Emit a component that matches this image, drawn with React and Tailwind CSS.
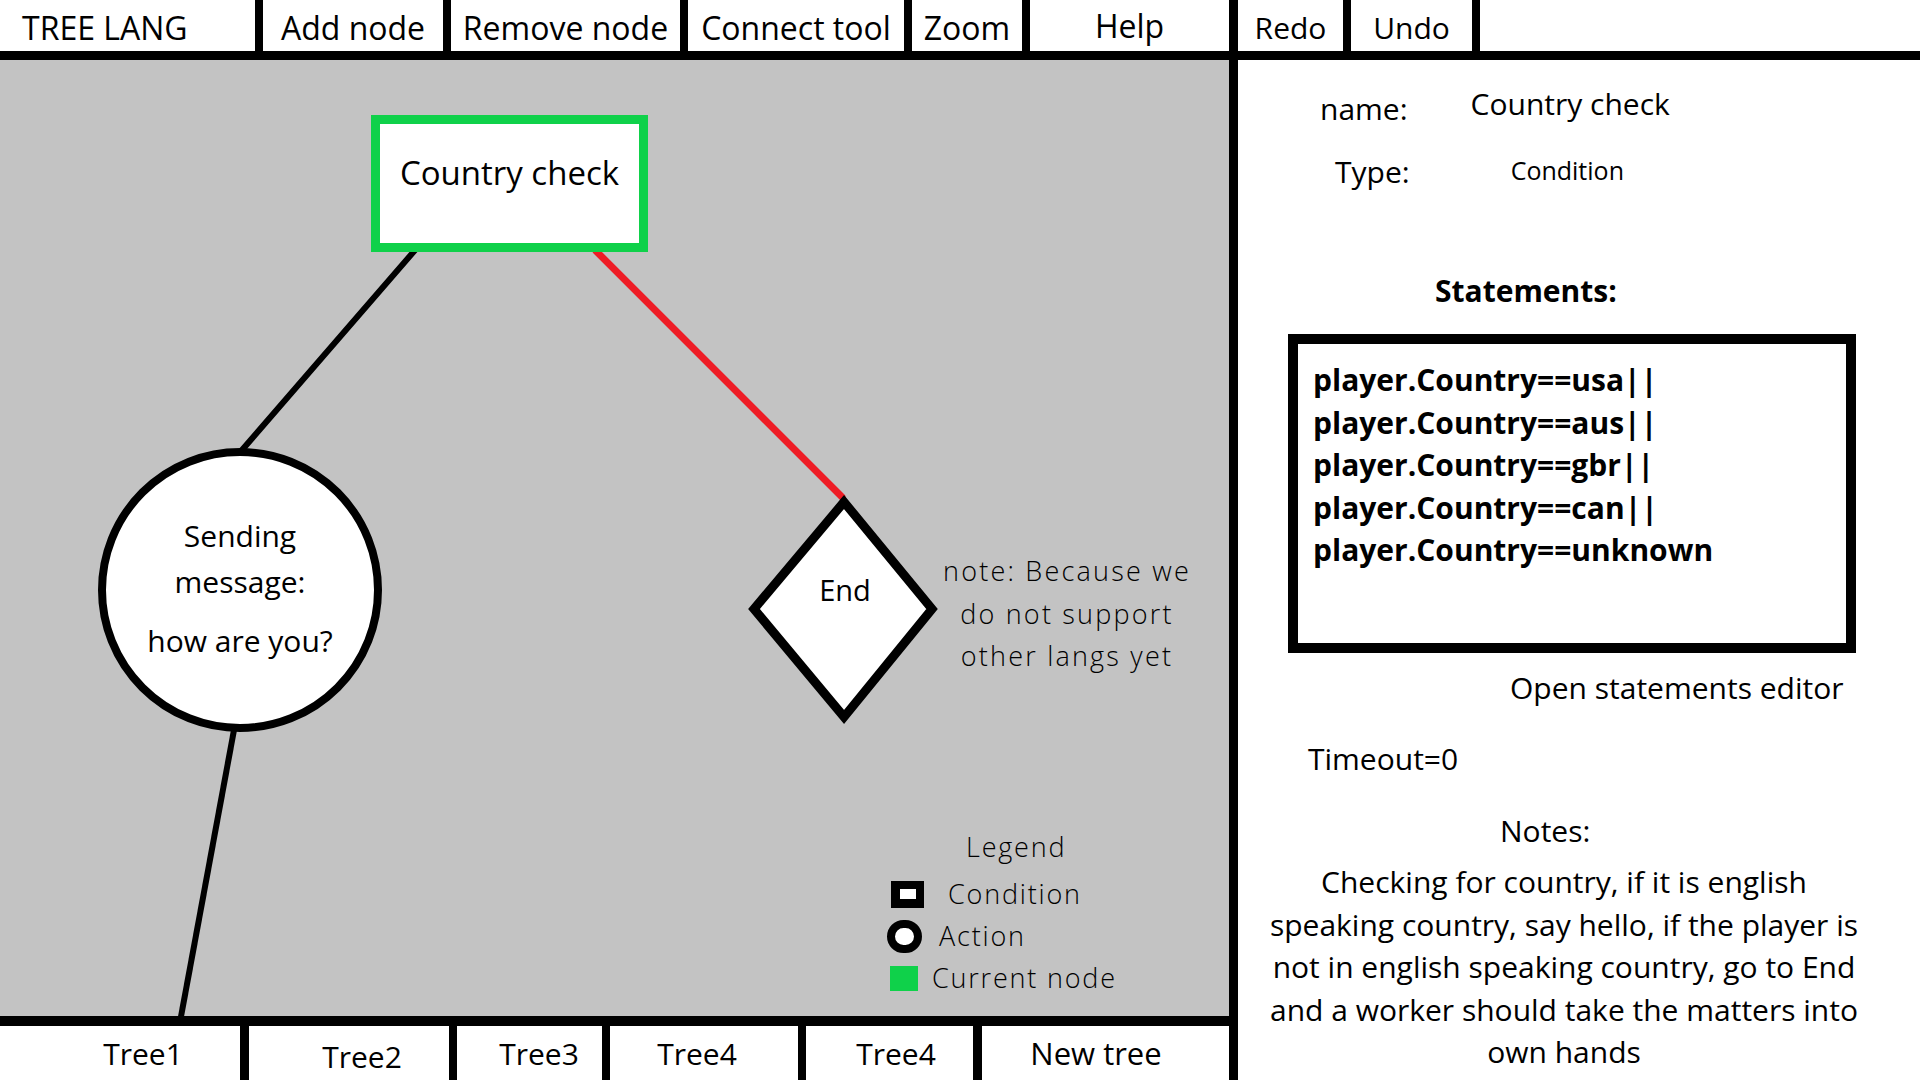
import React from 'react';

const font = { fontFamily: '"Open Sans", "Noto Sans", sans-serif' };

const menu = [
  { label: 'TREE LANG', w: 'w-[255px]', pad: 'pl-[22px] justify-start pt-[4px]' },
  { label: 'Add node', w: 'w-[180px]', pad: 'justify-center pt-[4px]' },
  { label: 'Remove node', w: 'w-[229px]', pad: 'justify-center pt-[4px]' },
  { label: 'Connect tool', w: 'w-[216px]', pad: 'justify-center pt-[4px]' },
  { label: 'Zoom', w: 'w-[110px]', pad: 'justify-center pt-[4px]' },
  { label: 'Help', w: 'w-[199px]', pad: 'justify-center' },
];

const tabs = [
  { label: 'Tree1', w: 'w-[240px]', pad: 'pl-[46px]' },
  { label: 'Tree2', w: 'w-[200px]', pad: 'pl-[26px] pt-[6px]' },
  { label: 'Tree3', w: 'w-[145px]', pad: 'pl-[19px]' },
  { label: 'Tree4', w: 'w-[188px]', pad: 'pr-[14px]' },
  { label: 'Tree4', w: 'w-[167px]', pad: 'pl-[13px]' },
  { label: 'New tree', w: 'w-[247px]', pad: 'pr-[19px] text-[31px]' },
];

const statements = [
  'player.Country==usa||',
  'player.Country==aus||',
  'player.Country==gbr||',
  'player.Country==can||',
  'player.Country==unknown',
];

const notes = [
  'Checking for country, if it is english',
  'speaking country, say hello, if the player is',
  'not in english speaking country, go to End',
  'and a worker should take the matters into',
  'own hands',
];

const MenuItem = ({ label, w, pad, size = 'text-[32px]' }) => (
  <div className={`${w} h-full flex items-center ${pad} ${size} whitespace-nowrap text-black`}>
    {label}
  </div>
);

const Sep = ({ w = 'w-[8px]' }) => <div className={`${w} h-full bg-black shrink-0`} />;

const Canvas = () => (
  <div className="relative flex-1 bg-[#c3c3c3] overflow-hidden">
    <svg className="absolute inset-0" width="1229" height="956">
      <line x1="416" y1="189" x2="242" y2="390" stroke="#000" strokeWidth="6" strokeLinecap="round" />
      <line x1="596" y1="191" x2="842" y2="437" stroke="#ee1c25" strokeWidth="7" strokeLinecap="round" />
      <line x1="234" y1="670" x2="180" y2="962" stroke="#000" strokeWidth="6" />
      <polygon points="844,442 754,549 844,657 932,549" fill="#fff" stroke="#000" strokeWidth="9" />
    </svg>

    {/* condition node */}
    <div className="absolute left-[371px] top-[55px] w-[277px] h-[137px] border-[9px] border-[#0fd14a] bg-white flex justify-center">
      <span className="mt-[29px] text-[33px] leading-[40px] whitespace-nowrap">Country check</span>
    </div>

    {/* action node */}
    <div className="absolute left-[98px] top-[388px] w-[284px] h-[284px] rounded-full border-[8px] border-black bg-white flex flex-col items-center text-[30px]">
      <span className="mt-[57px] leading-[46px]">Sending</span>
      <span className="leading-[46px]">message:</span>
      <span className="mt-[13px] leading-[46px] whitespace-nowrap">how are you?</span>
    </div>

    <div className="absolute left-[805px] top-[510px] w-[80px] text-center text-[29px] leading-[40px]">End</div>

    <div className="absolute left-[917px] top-[490px] w-[300px] text-center text-[27px] font-light tracking-[2.2px] leading-[42.5px]">
      note: Because we
      <br />
      do not support
      <br />
      other langs yet
    </div>

    {/* legend */}
    <div className="absolute left-[886px] top-[766px] flex flex-col text-[27px] font-light tracking-[1.8px]">
      <div className="ml-[80px] leading-[42px] mb-[6px]">Legend</div>
      <div className="flex items-center h-[40px]">
        <div className="ml-[5px] w-[33px] h-[27px] bg-black flex items-center justify-center">
          <div className="w-[16px] h-[10px] bg-white" />
        </div>
        <span className="ml-[24px]">Condition</span>
      </div>
      <div className="flex items-center h-[45px]">
        <div className="ml-[1px] w-[35px] h-[33px] rounded-full border-[8px] border-black bg-white" />
        <span className="ml-[17px]">Action</span>
      </div>
      <div className="flex items-center h-[38px]">
        <div className="ml-[4px] w-[28px] h-[25px] bg-[#0fd14a]" />
        <span className="ml-[14px]">Current node</span>
      </div>
    </div>
  </div>
);

const SidePanel = () => (
  <div className="flex-1 bg-white flex flex-col text-[30px] text-black">
    <div className="mt-[24px] flex items-start">
      <span className="ml-[82px] mt-[5px] leading-[40px]">name:</span>
      <span className="ml-[63px] leading-[40px]">Country check</span>
    </div>
    <div className="mt-[22px] flex items-center h-[40px]">
      <span className="ml-[97px]">Type:</span>
      <span className="ml-[101px] text-[25px]">Condition</span>
    </div>
    <div className="mt-[80px] ml-[197px] leading-[40px] font-bold">Statements:</div>
    <div className="mt-[23px] ml-[50px] w-[568px] h-[319px] border-[10px] border-black pt-[15px] pl-[15px] font-bold text-[30px] leading-[42.5px]">
      {statements.map((s, i) => (
        <div key={i}>{s}</div>
      ))}
    </div>
    <div className="mt-[15px] ml-[272px] leading-[40px] whitespace-nowrap">Open statements editor</div>
    <div className="mt-[31px] ml-[70px] leading-[40px]">Timeout=0</div>
    <div className="mt-[32px] ml-[262px] w-[80px] text-center leading-[40px]">Notes:</div>
    <div className="mt-[10px] ml-[8px] w-[636px] text-center leading-[42.5px] whitespace-nowrap">
      {notes.map((n, i) => (
        <div key={i}>{n}</div>
      ))}
    </div>
  </div>
);

export default function App() {
  return (
    <div className="w-[1920px] h-[1080px] flex flex-col bg-white overflow-hidden" style={font}>
      <div className="h-[51px] flex">
        {menu.map((m, i) => (
          <React.Fragment key={i}>
            <MenuItem {...m} />
            <Sep w={i === 5 ? 'w-[9px]' : 'w-[8px]'} />
          </React.Fragment>
        ))}
        <MenuItem label="Redo" w="w-[105px]" pad="justify-center pt-[3px]" size="text-[30px]" />
        <Sep />
        <MenuItem label="Undo" w="w-[121px]" pad="justify-center pt-[3px]" size="text-[30px]" />
        <Sep />
        <div className="flex-1" />
      </div>
      <div className="h-[9px] bg-black" />
      <div className="flex-1 flex">
        <div className="w-[1229px] flex flex-col">
          <Canvas />
          <div className="h-[10px] bg-black" />
          <div className="h-[54px] flex">
            {tabs.map((t, i) => (
              <React.Fragment key={i}>
                <div className={`${t.w} h-full flex items-center justify-center ${t.pad} text-[30px]`}>
                  {t.label}
                </div>
                {i < tabs.length - 1 && <Sep w={i === 0 || i === 4 ? 'w-[9px]' : 'w-[8px]'} />}
              </React.Fragment>
            ))}
          </div>
        </div>
        <div className="w-[9px] bg-black" />
        <SidePanel />
      </div>
    </div>
  );
}
